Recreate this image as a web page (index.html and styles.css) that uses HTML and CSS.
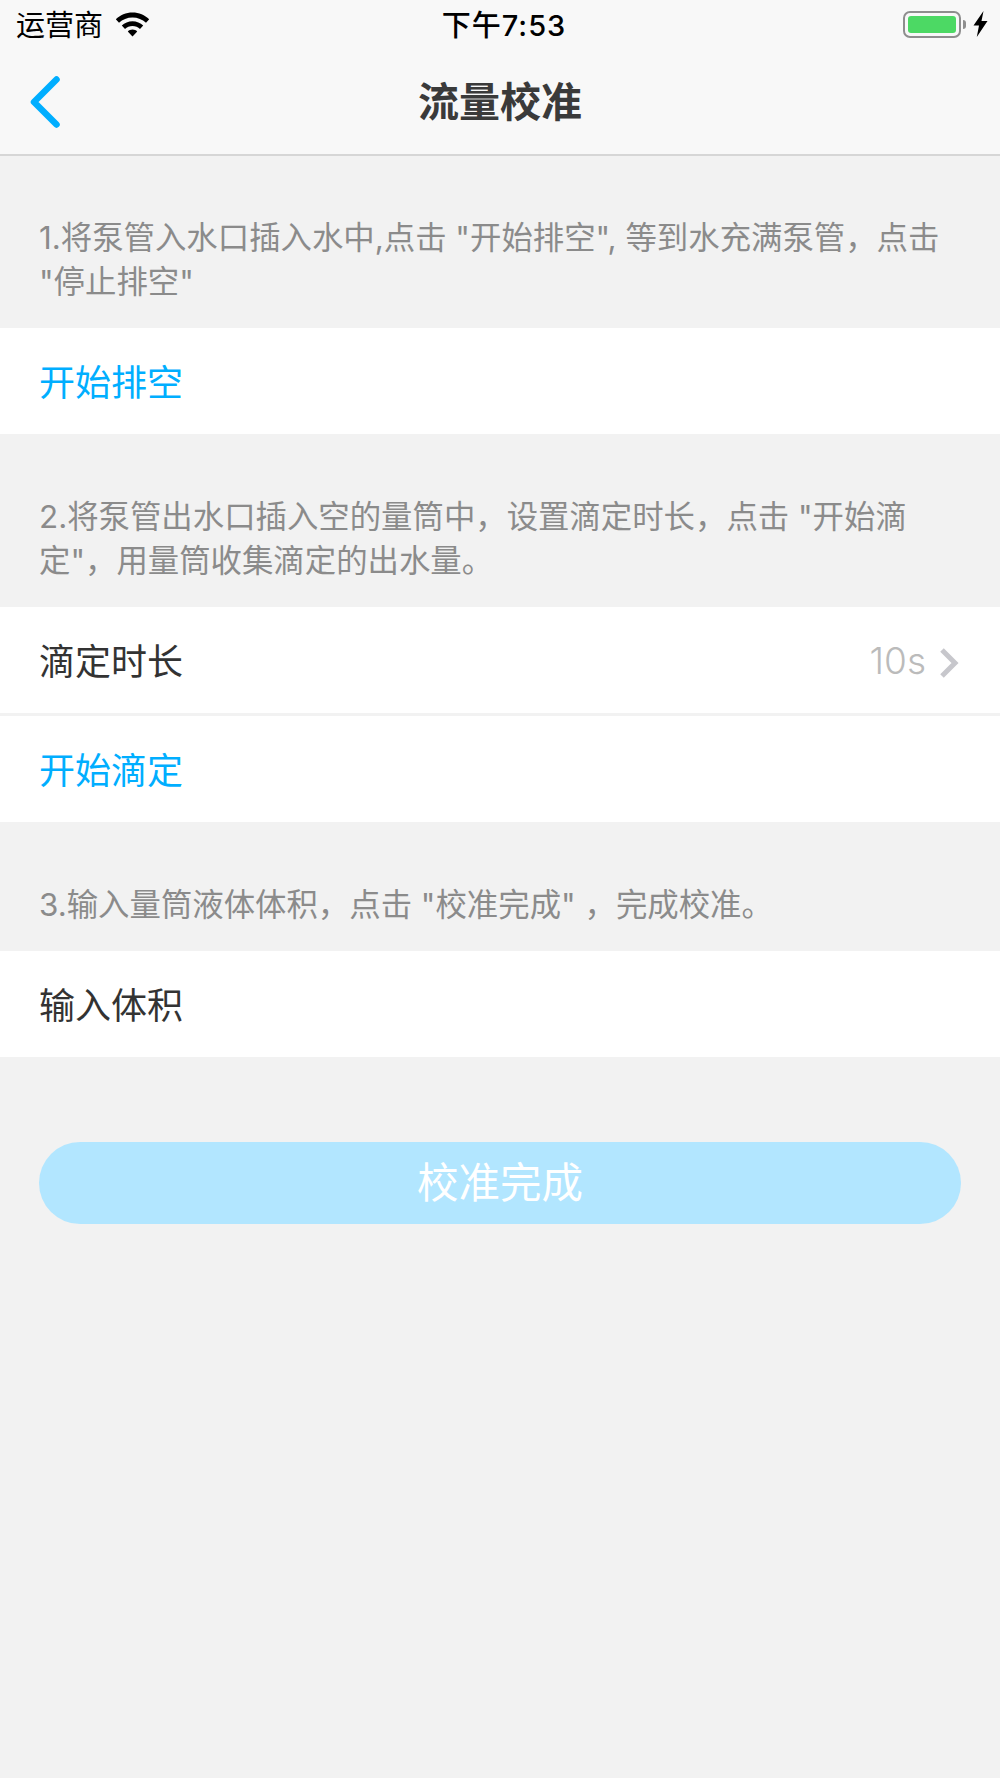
FILE: index.html
```html
<!DOCTYPE html>
<html lang="zh-CN">
<head>
    <meta charset="UTF-8">
    <meta name="viewport" content="width=device-width, initial-scale=1.0">
    <title>流量校准</title>
    <link rel="stylesheet" href="styles.css">
</head>
<body>
    <header class="top-bar">
        <div class="status-bar">
            <div class="status-left">
                <span class="carrier">运营商</span>
                <svg class="wifi" width="35" height="25" viewBox="0 0 35 25">
                    <path d="M17.5 0.5C11 0.5 5.2 3 0.8 7.2L4 10.8C7.6 7.4 12.3 5.4 17.5 5.4S27.4 7.4 31 10.8L34.2 7.2C29.8 3 24 0.5 17.5 0.5Z"/>
                    <path d="M17.5 9.2C13.4 9.2 9.6 10.8 6.8 13.5L10 17C11.9 15.2 14.6 14.1 17.5 14.1S23.1 15.2 25 17L28.2 13.5C25.4 10.8 21.6 9.2 17.5 9.2Z"/>
                    <path d="M17.5 17.6C15.7 17.6 14 18.3 12.8 19.5L17.5 24.6L22.2 19.5C21 18.3 19.3 17.6 17.5 17.6Z"/>
                </svg>
            </div>
            <div class="status-time">下午7:53</div>
            <div class="status-right">
                <div class="battery"><div class="battery-fill"></div></div>
                <div class="battery-tip"></div>
                <svg class="bolt" width="15" height="26" viewBox="0 0 15 26">
                    <path d="M10.5 0L0.5 14.5H6L3.8 26L14.5 10H8.5Z"/>
                </svg>
            </div>
        </div>
        <nav class="nav-bar">
            <svg class="back" width="30" height="52" viewBox="0 0 30 52">
                <path d="M26.5 3.5L4 26L26.5 48.5"/>
            </svg>
            <h1 class="nav-title">流量校准</h1>
        </nav>
    </header>

    <p class="hint">1.将泵管入水口插入水中,点击 "开始排空", 等到水充满泵管，点击 "停止排空"</p>
    <div class="row row-action">开始排空</div>

    <p class="hint">2.将泵管出水口插入空的量筒中，设置滴定时长，点击 "开始滴定"，用量筒收集滴定的出水量。</p>
    <div class="row">
        <span>滴定时长</span>
        <span class="row-value">
            10s
            <svg class="chevron" width="20" height="32" viewBox="0 0 20 32">
                <path d="M3 3L16 16L3 29"/>
            </svg>
        </span>
    </div>
    <div class="row row-action row-split">开始滴定</div>

    <p class="hint">3.输入量筒液体体积，点击 "校准完成" ，完成校准。</p>
    <div class="row">输入体积</div>

    <button class="submit">校准完成</button>
</body>
</html>
```

FILE: styles.css
```css
* {
    box-sizing: border-box;
}
body {
    margin: 0;
    min-height: 1778px;
    background-color: #f2f2f2;
    font-family: "Inter", "Noto Sans CJK SC", sans-serif;
    color: #333;
}
.top-bar {
    height: 156px;
    background-color: #f8f8f8;
    border-bottom: 2px solid #d6d6d6;
}
.status-bar {
    display: flex;
    align-items: center;
    height: 48px;
    padding: 0 12px 2px 16px;
    color: #000;
    font-size: 29px;
}
.status-left,
.status-right {
    flex: 1 1 0;
    display: flex;
    align-items: center;
}
.status-right {
    justify-content: flex-end;
    margin-top: 2px;
}
.carrier {
    margin-right: 12px;
}
.wifi {
    margin-top: 3px;
}
.status-time {
    margin-left: 4px;
    font-weight: 500;
    letter-spacing: 1px;
}
.battery {
    width: 58px;
    height: 27px;
    padding: 3px;
    border: 2px solid #8e8e8e;
    border-radius: 7px;
}
.battery-fill {
    height: 100%;
    background-color: #4cd964;
    border-radius: 3px;
}
.battery-tip {
    width: 3px;
    height: 9px;
    margin-left: 2px;
    background-color: #8e8e8e;
    border-radius: 0 3px 3px 0;
}
.bolt {
    margin-left: 7px;
}
.nav-bar {
    display: flex;
    align-items: center;
    justify-content: center;
    position: relative;
    height: 106px;
    padding-top: 3px;
}
.back {
    position: absolute;
    left: 30px;
    top: 28px;
}
.back path,
.chevron path {
    fill: none;
}
.back path {
    stroke: #00aeff;
    stroke-width: 6.5;
    stroke-linecap: round;
    stroke-linejoin: round;
}
.nav-title {
    margin: 0;
    font-size: 41px;
    font-weight: 700;
    line-height: 1;
    color: #3a3a3a;
}
.hint {
    margin: 0;
    padding: 61px 39px 24px;
    font-size: 31.4px;
    line-height: 44px;
    color: #8b8b8b;
}
.top-bar + .hint {
    padding-top: 60px;
}
.row {
    display: flex;
    align-items: center;
    justify-content: space-between;
    height: 106px;
    padding: 0 39px 2px;
    background-color: #fff;
    font-size: 36px;
}
.row-action {
    color: #00aeff;
}
.row-split {
    height: 109px;
    border-top: 3px solid #f2f2f2;
}
.row-value {
    display: flex;
    align-items: center;
    gap: 13px;
    margin-top: 2px;
    margin-right: 2px;
    color: #bbb;
    font-size: 37px;
    font-weight: 300;
}
.chevron {
    margin-top: 6px;
}
.chevron path {
    stroke: #c7c7cc;
    stroke-width: 5;
}
.submit {
    display: block;
    width: 922px;
    height: 82px;
    margin: 85px 39px 0;
    padding: 0 0 6px;
    border: none;
    border-radius: 41px;
    background-color: #b2e6ff;
    color: #fff;
    font-family: inherit;
    font-size: 41.5px;
}
```
